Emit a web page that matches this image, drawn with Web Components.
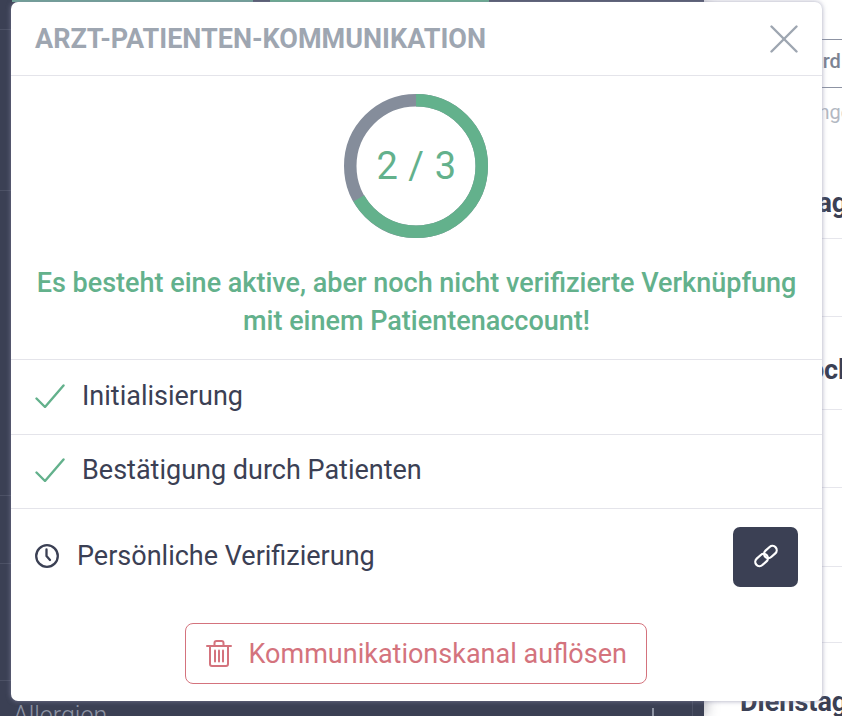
<!DOCTYPE html>
<html lang="de">
<head>
<meta charset="utf-8">
<title>Arzt-Patienten-Kommunikation</title>
<style>
  html, body { margin: 0; height: 100%; }
  body { font-family: Roboto, "Liberation Sans", sans-serif; overflow: hidden; background: #fff; }
</style>
</head>
<body>
<page-backdrop></page-backdrop>
<comm-modal heading="ARZT-PATIENTEN-KOMMUNIKATION">
  <progress-ring value="2" total="3" slot="ring"></progress-ring>
  <span slot="message">Es besteht eine aktive, aber noch nicht verifizierte Verknüpfung<br>mit einem Patientenaccount!</span>
  <status-row state="done">Initialisierung</status-row>
  <status-row state="done" style="height:74px">Bestätigung durch Patienten</status-row>
  <status-row state="pending" action>Persönliche Verifizierung</status-row>
  <danger-button slot="footer">Kommunikationskanal auflösen</danger-button>
</comm-modal>

<script>
(function () {

  const ICONS = {
    close: `<svg viewBox="0 0 28 28" width="28" height="28" fill="none" stroke="currentColor" stroke-width="2.4" stroke-linecap="round"><path d="M1.5 1.5l25 25"/><path d="M26.5 1.5l-25 25"/></svg>`,
    check: `<svg viewBox="0 0 30 24" width="30" height="24" fill="none" stroke="currentColor" stroke-width="2.4" stroke-linecap="round" stroke-linejoin="round"><path d="M1.5 14.5l8.5 8.5 18.5 -21.5"/></svg>`,
    clock: `<svg viewBox="0 0 24 24" width="24" height="24" fill="none" stroke="currentColor" stroke-width="2.3" stroke-linecap="round" stroke-linejoin="round"><circle cx="12" cy="12" r="10.8"/><path d="M11.5 5.5v6.5l3.5 4"/></svg>`,
    link: `<svg viewBox="0 0 26 26" width="26" height="26" fill="none" stroke="currentColor" stroke-width="2.2"><rect x="1.6" y="12.75" width="14" height="8.5" rx="4.25" transform="rotate(-42 8.6 17)"/><rect x="10.4" y="4.75" width="14" height="8.5" rx="4.25" transform="rotate(-42 17.4 9)"/></svg>`,
    trash: `<svg viewBox="0 0 26 27" width="26" height="27" fill="none" stroke="currentColor" stroke-width="2" stroke-linecap="round" stroke-linejoin="round"><path d="M1 6h24"/><path d="M8.5 6V3a2 2 0 0 1 2 -2h5a2 2 0 0 1 2 2v3"/><path d="M4 6v18a2 2 0 0 0 2 2h14a2 2 0 0 0 2 -2V6"/><path d="M9 10.5v11"/><path d="M13 10.5v11"/><path d="M17 10.5v11"/></svg>`,
  };

  // what lies behind the dialog, mostly covered
  class PageBackdrop extends HTMLElement {
    constructor() {
      super();
      this.attachShadow({mode: 'open'});
      this.shadowRoot.innerHTML = `
        <style>
        :host { display: grid; grid-template-columns: 704px 1fr; height: 716px; overflow: hidden; }
        .left {
          background: #3b4054;
          box-shadow: 2px 0 12px rgba(40, 44, 60, .35);
          position: relative;
          display: flex;
          flex-direction: column;
          color: #8d93a3;
          overflow: hidden;
        }
        .strip { display: flex; height: 2px; flex: none; }
        .strip i { display: block; }
        .row { border-bottom: 1px solid #4c5165; flex: none; box-sizing: border-box; }
        .allergien {
          display: flex;
          align-items: flex-start;
          padding-left: 13px;
          font-size: 25px;
          font-weight: 300;
          line-height: 28px;
          flex: 1;
        }
        .allergien b { margin-left: auto; width: 2px; height: 12px; margin-top: 27px; background: #8d93a3; font-size: 0; }
        .allergien u { width: 1px; height: 40px; margin-left: 38px; margin-right: 11px; background: #4c5165; }
        .right { min-width: 0; overflow: hidden; white-space: nowrap; color: #3b4054; }
        .tab {
          margin-top: 39px;
          height: 49px;
          box-sizing: border-box;
          border-top: 1px solid #8d93a3;
          border-bottom: 1px solid #8d93a3;
          padding: 10px 0 0 56px;
          font-size: 20px;
          line-height: 22px;
          font-weight: 500;
          color: #7c8392;
        }
        .hint { height: 46px; padding: 13px 0 0 39px; box-sizing: border-box; font-size: 20px; line-height: 22px; color: #b3b8c2; }
        .line { border-bottom: 1px solid #e6e6ec; box-sizing: border-box; }
        .day { font-size: 27px; font-weight: 700; line-height: 30px; padding-left: 36px; }
        </style>
        <div class="left">
          <div class="strip">
            <i style="width:12px"></i>
            <i style="width:241px;background:#6da596"></i>
            <i style="width:17px;background:#50556a"></i>
            <i style="width:219px;background:#64b18d"></i>
            <i style="width:215px;background:#50556a"></i>
          </div>
          <div class="row" style="height:28px"></div>
          <div class="row" style="height:161px"></div>
          <div class="row" style="height:305px"></div>
          <div class="row" style="height:68px"></div>
          <div class="row" style="height:117px"></div>
          <div class="allergien"><span style="margin-top:21px">Allergien</span><b></b><u></u></div>
        </div>
        <div class="right">
          <div class="tab">Standard</div>
          <div class="hint">Einstellungen</div>
          <div class="line day" style="height:105px;padding-top:54px;box-sizing:border-box">Dienstag</div>
          <div class="line" style="height:78px"></div>
          <div class="line day" style="height:93px;padding-top:38px;box-sizing:border-box">Mittwoch</div>
          <div class="line" style="height:78px"></div>
          <div class="line" style="height:79px"></div>
          <div class="line" style="height:76px"></div>
          <div class="day" style="padding-top:44px">Dienstag</div>
        </div>
      `;
    }
  }

  class CommModal extends HTMLElement {
    constructor() {
      super();
      this.attachShadow({mode: 'open'});
      this.shadowRoot.innerHTML = `
        <style>
        :host {
          position: absolute;
          left: 11px;
          top: 2px;
          width: 811px;
          height: 699px;
          display: flex;
          flex-direction: column;
          box-sizing: border-box;
          background: #fff;
          border-radius: 7px;
          box-shadow: 0 0 5px rgba(135, 138, 165, .75);
        }
        header {
          height: 74px;
          flex: none;
          box-sizing: border-box;
          display: flex;
          align-items: center;
          justify-content: space-between;
          padding: 0 24px;
          border-bottom: 1px solid #e4e4ea;
        }
        h1 { margin: 1px 0 0; font-size: 27px; line-height: 30px; font-weight: 700; color: #9ea6b1; white-space: nowrap; }
        .close { color: #9ea6b1; display: flex; margin: 0; }
        .top { flex: none; height: 283px; box-sizing: border-box; padding-top: 18px; display: flex; flex-direction: column; align-items: center; }
        .message {
          margin-top: 26px;
          font-size: 27px;
          line-height: 38px;
          font-weight: 500;
          color: #63b18c;
          text-align: center;
          white-space: nowrap;
        }
        .footer { flex: 1; display: flex; justify-content: center; align-items: flex-start; padding-right: 2px; }
        </style>
        <header>
          <h1></h1>
          <span class="close">${ICONS.close}</span>
        </header>
        <div class="top">
          <slot name="ring"></slot>
          <div class="message"><slot name="message"></slot></div>
        </div>
        <slot></slot>
        <div class="footer"><slot name="footer"></slot></div>
      `;
    }
    connectedCallback() {
      this.shadowRoot.querySelector('h1').textContent = this.getAttribute('heading');
    }
  }

  class ProgressRing extends HTMLElement {
    constructor() {
      super();
      this.attachShadow({mode: 'open'});
    }
    connectedCallback() {
      const value = Number(this.getAttribute('value'));
      const total = Number(this.getAttribute('total'));
      const r = 65.75;
      const len = 2 * Math.PI * r;
      this.shadowRoot.innerHTML = `
        <style>
        :host { display: block; width: 144px; height: 144px; position: relative; margin-right: 2px; }
        svg { display: block; }
        span {
          position: absolute;
          inset: 0;
          padding-left: 2px;
          display: flex;
          align-items: center;
          justify-content: center;
          font-size: 38px;
          letter-spacing: .6px;
          color: #63b18c;
        }
        </style>
        <svg viewBox="0 0 144 144" width="144" height="144" fill="none" stroke-width="12.5">
          <circle cx="72" cy="72" r="${r}" stroke="#858d9b"/>
          <circle cx="72" cy="72" r="${r}" stroke="#63b18c" stroke-dasharray="${len * value / total} ${len}" transform="rotate(-90 72 72)"/>
        </svg>
        <span>${value} / ${total}</span>
      `;
    }
  }

  class StatusRow extends HTMLElement {
    constructor() {
      super();
      this.attachShadow({mode: 'open'});
    }
    connectedCallback() {
      const done = this.getAttribute('state') === 'done';
      this.shadowRoot.innerHTML = `
        <style>
        :host {
          display: flex;
          align-items: center;
          box-sizing: border-box;
          height: ${done ? '75px' : '94px'};
          border-top: 1px solid #e4e4ea;
          padding: 0 24px ${done ? '3px' : '0'};
          font-size: 27px;
          color: #3b4054;
        }
        .icon { display: flex; flex: none; color: ${done ? '#63b18c' : '#3b4054'}; margin-right: ${done ? '17px' : '18px'}; }
        .label { flex: 1; white-space: nowrap; }
        </style>
        <span class="icon">${done ? ICONS.check : ICONS.clock}</span>
        <span class="label"><slot></slot></span>
        ${this.hasAttribute('action') ? '<link-button></link-button>' : ''}
      `;
    }
  }

  class LinkButton extends HTMLElement {
    constructor() {
      super();
      this.attachShadow({mode: 'open'});
      this.shadowRoot.innerHTML = `
        <style>
        :host {
          display: flex;
          align-items: center;
          justify-content: center;
          flex: none;
          width: 65px;
          height: 60px;
          margin-top: 3px;
          border-radius: 7px;
          background: #3b4054;
          color: #fff;
        }
        svg { display: block; margin-bottom: 2px; }
        </style>
        ${ICONS.link}
      `;
    }
  }

  class DangerButton extends HTMLElement {
    constructor() {
      super();
      this.attachShadow({mode: 'open'});
      this.shadowRoot.innerHTML = `
        <style>
        :host {
          display: flex;
          align-items: center;
          box-sizing: border-box;
          width: 462px;
          height: 61px;
          margin-top: 21px;
          padding-left: 20px;
          gap: 17px;
          border: 1px solid #d4737d;
          border-radius: 8px;
          font-size: 27px;
          color: #d4737d;
          white-space: nowrap;
        }
        svg { display: block; flex: none; }
        </style>
        ${ICONS.trash}
        <slot></slot>
      `;
    }
  }

  customElements.define('page-backdrop', PageBackdrop);
  customElements.define('comm-modal', CommModal);
  customElements.define('progress-ring', ProgressRing);
  customElements.define('status-row', StatusRow);
  customElements.define('link-button', LinkButton);
  customElements.define('danger-button', DangerButton);
})();
</script>
</body>
</html>
